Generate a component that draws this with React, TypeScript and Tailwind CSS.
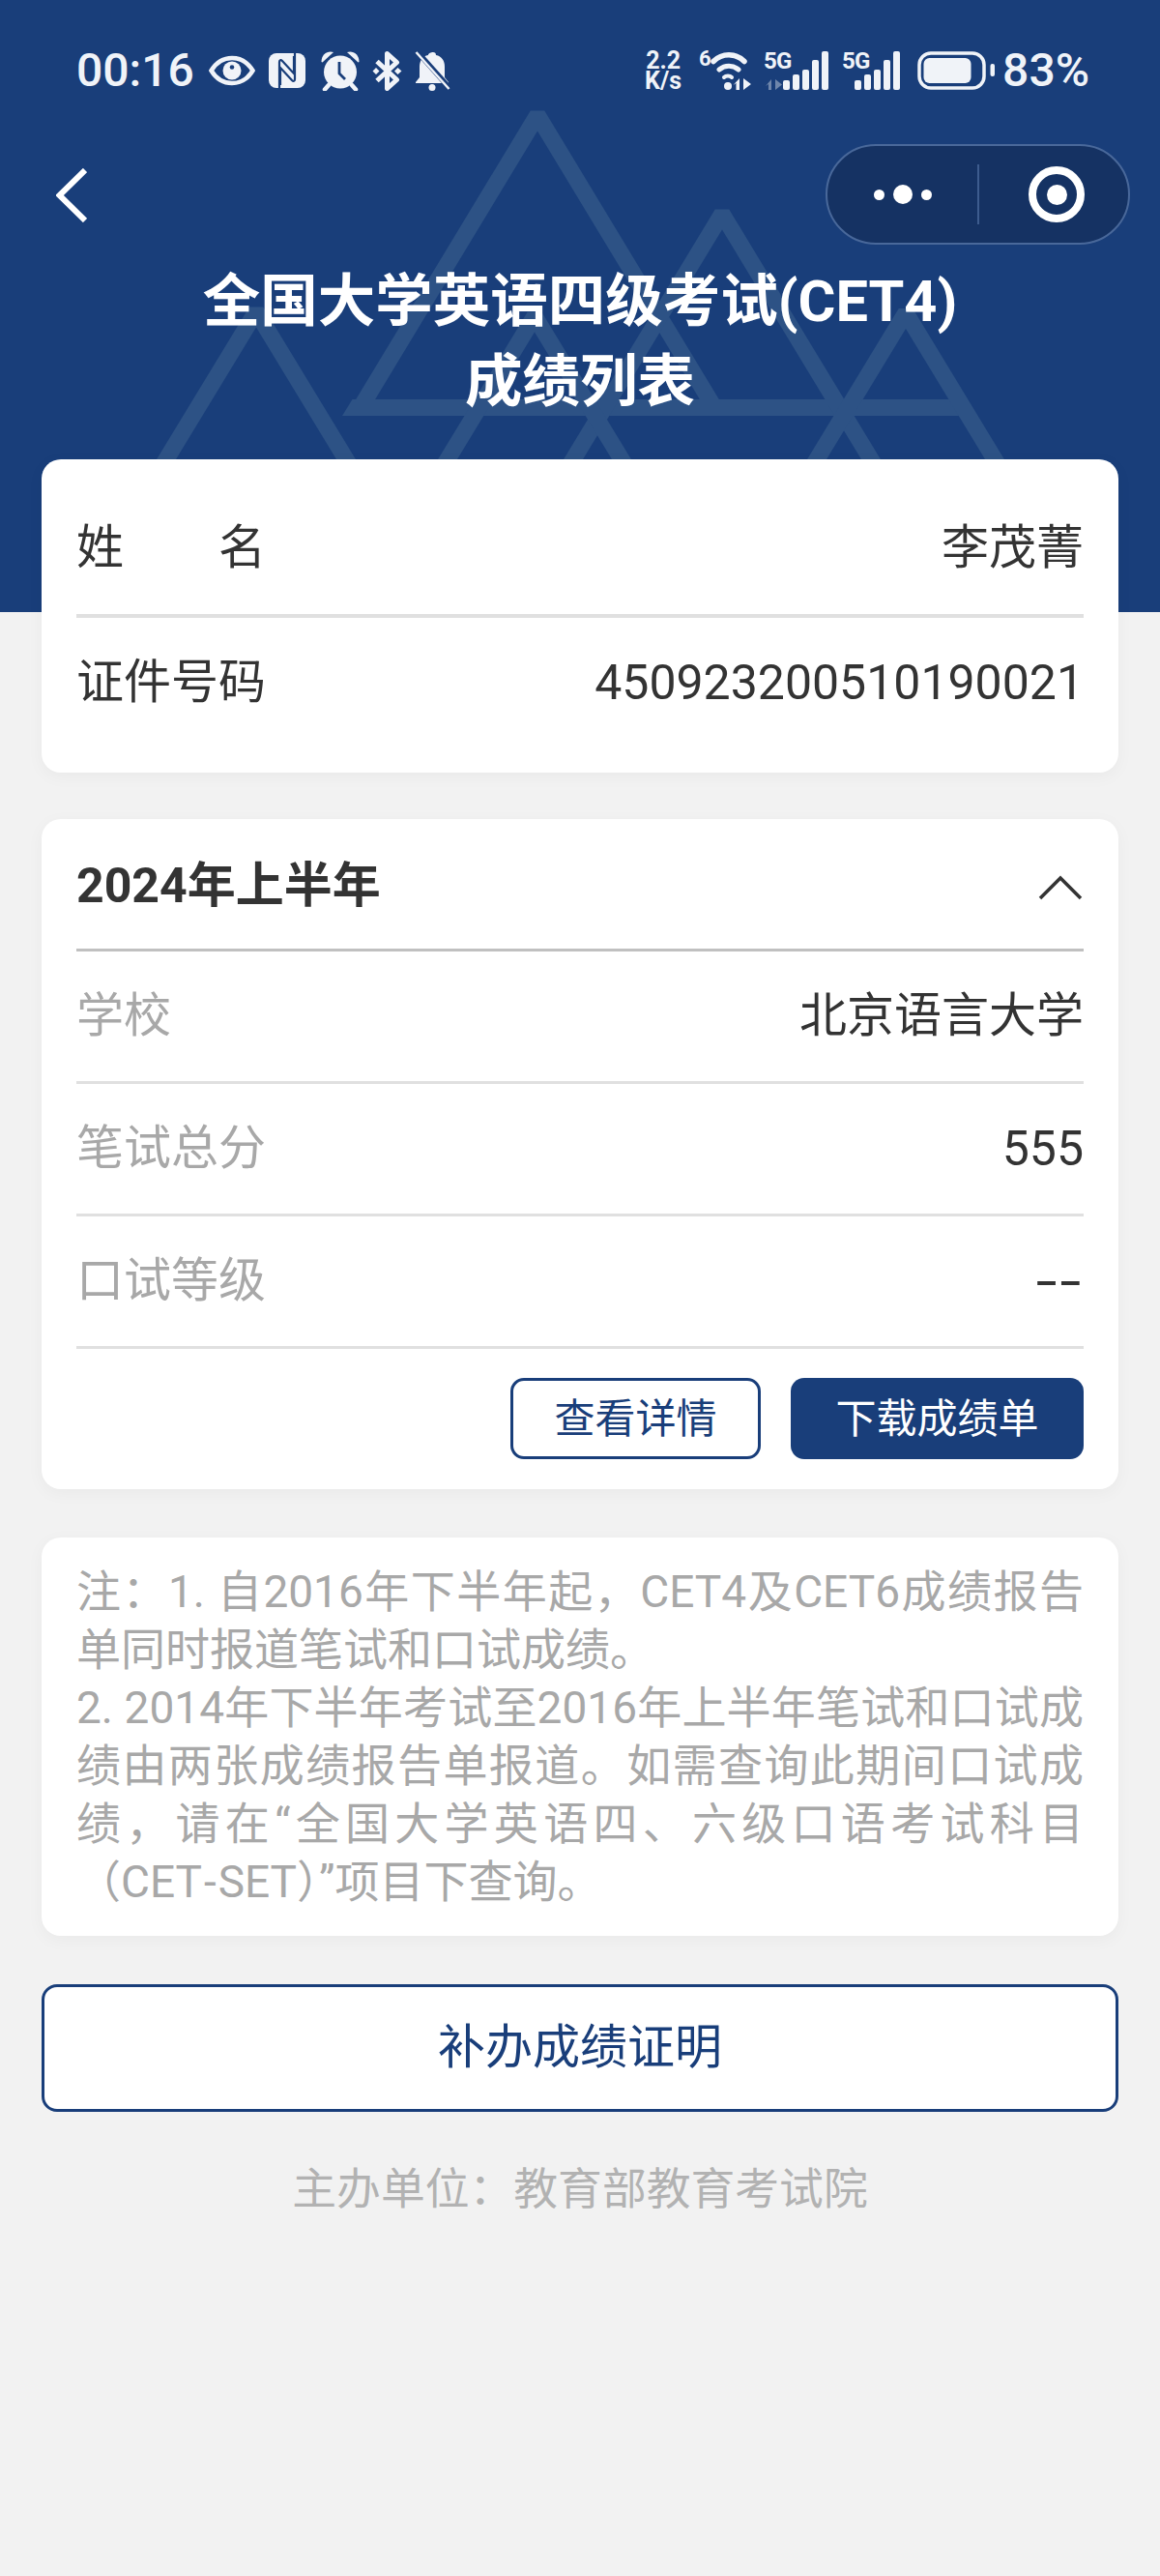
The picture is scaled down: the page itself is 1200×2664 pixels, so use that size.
import React from "react";

function Eye() {
  return (
    <svg width="48" height="32" viewBox="0 0 48 32" fill="none">
      <path d="M2.5 16C8 7 15 3 24 3s16 4 21.500 13C40 25 33 29 24 29S8 25 2.500 16Z" stroke="#f0f3f8" strokeWidth="4.500" />
      <circle cx="24" cy="16" r="9.500" fill="#f0f3f8" />
      <circle cx="24" cy="12.500" r="2.300" fill="#193e7a" />
    </svg>
  );
}

function Nfc() {
  return (
    <svg width="38" height="36" viewBox="0 0 38 36" fill="none">
      <rect width="38" height="36" rx="8" fill="#f0f3f8" />
      <path d="M11 36V9c0-2 1.500-2.500 3-1l12 13V3" stroke="#193e7a" strokeWidth="2.200" />
      <path d="M27 0v27c0 2-1.500 2.500-3 1L12 15v18" stroke="#193e7a" strokeWidth="2.200" />
    </svg>
  );
}

function Alarm() {
  return (
    <svg width="40" height="41" viewBox="0 0 40 41" fill="none">
      <circle cx="20" cy="21.500" r="17" fill="#f0f3f8" />
      <path d="M0.500 11C0.500 3 7 -1 13 1L1.500 11.500Z" fill="#f0f3f8" />
      <path d="M39.500 11C39.500 3 33 -1 27 1L38.500 11.500Z" fill="#f0f3f8" />
      <path d="M8 35l-4 4.500M32 35l4 4.500" stroke="#f0f3f8" strokeWidth="4.500" strokeLinecap="round" />
      <path d="M19 11v12l6 6" stroke="#193e7a" strokeWidth="2.800" />
    </svg>
  );
}

function Bluetooth() {
  return (
    <svg width="31" height="41" viewBox="0 0 31 41" fill="none">
      <path d="M5 10.500l20.500 19L15.500 38.500V2.500l10 9L5 30.500" stroke="#f0f3f8" strokeWidth="5" strokeLinejoin="round" />
      <path d="M0.500 20.500l3.500-3.500 3.500 3.500-3.500 3.500ZM23 20.500l3.500-3.500 4 3.500-4 3.500Z" fill="#f0f3f8" />
    </svg>
  );
}

function BellOff() {
  return (
    <svg width="38" height="41" viewBox="0 0 38 41" fill="none">
      <path d="M19 1c2 0 3 1 3 3 6 1 9 6 9 12v11l4 5v1H1v-1l4-5V16c0-6 3-11 9-12 0-2 3-3 5-3Z" fill="#f0f3f8" />
      <circle cx="18" cy="37.500" r="3.500" fill="#f0f3f8" />
      <path d="M4 2l32 36" stroke="#193e7a" strokeWidth="5.500" />
      <path d="M1.500 1l34 38" stroke="#f0f3f8" strokeWidth="2.500" />
    </svg>
  );
}

function Wifi() {
  return (
    <svg width="55" height="42" viewBox="0 0 55 42" fill="none" className="overflow-visible">
      <text x="0" y="16" fill="#f0f3f8" fontSize="22" fontWeight="700" fontFamily="Roboto">6</text>
      <path d="M15 11.500c9-9 23-9 32 0" stroke="#f0f3f8" strokeWidth="5.500" strokeLinecap="round" />
      <path d="M21 20c6-5 14-5 20 0" stroke="#f0f3f8" strokeWidth="5" strokeLinecap="round" />
      <path d="M26 28c2-2 6-2 8 0" stroke="#f0f3f8" strokeWidth="4" strokeLinecap="round" />
      <circle cx="30" cy="37" r="4" fill="#f0f3f8" />
      <path d="M42 29v12h-3.500v-7l-3 2 6.500-7ZM46 29l8 6-8 6Z" fill="#f0f3f8" />
    </svg>
  );
}

function Signal({ arrows }: { arrows: boolean }) {
  const bars = [
    { x: 0, top: 31 },
    { x: 10, top: 25 },
    { x: 20, top: 20 },
    { x: 30, top: 10 },
    { x: 40, top: 1 },
  ];
  return (
    <svg width={arrows ? 69 : 62} height="42" viewBox={arrows ? "-21 0 69 42" : "-14 0 62 42"} fill="none" className="overflow-visible">
      <text x={arrows ? -20 : -13} y="19" fill="#f0f3f8" fontSize="24" fontWeight="700" fontFamily="Roboto" letterSpacing="-0.800">5G</text>
      {arrows && <path d="M-12 30v11h-3v-6l-3 2 6-7ZM-8 30l7 5.500-7 5.500Z" fill="#6f86ab" />}
      {bars.map((b) => (
        <rect key={b.x} x={b.x} y={b.top} width="7" height={41 - b.top} rx="2" fill="#f0f3f8" />
      ))}
    </svg>
  );
}

function Battery() {
  return (
    <svg width="80" height="40" viewBox="0 0 80 40" fill="none">
      <rect x="2" y="2" width="67" height="36" rx="12" stroke="#f0f3f8" strokeWidth="3.500" />
      <rect x="6.500" y="7" width="49" height="26" rx="6" fill="#f0f3f8" />
      <rect x="75.500" y="13" width="4.500" height="13" rx="2" fill="#f0f3f8" />
    </svg>
  );
}

function HeaderArt() {
  return (
    <svg className="absolute inset-0 h-full w-full" viewBox="0 0 1200 633" fill="none" stroke="#2d5285" strokeWidth="17" strokeLinejoin="bevel">
      <path d="M373 421.500L556 119l183 302.500" />
      <polygon points="354,430 364.500,413 986,413 996,430" fill="#2d5285" stroke="none" />
      <path d="M590 480L747 221l157 259" />
      <path d="M842 480l95-156.500 95 156.500" />
      <path d="M460 480l93-153 93 153" />
      <path d="M169 480l96-158 96 158" />
    </svg>
  );
}

const rows = [
  { label: "学校", value: <span>北京语言大学</span> },
  { label: "笔试总分", value: <span className="text-[50px]">555</span> },
  { label: "口试等级", value: <span className="text-[80px] leading-none font-light tracking-[2px]">--</span> },
];

export default function App() {
  return (
    <div className="min-h-[2664px] bg-[#f2f2f2] font-['Roboto','Noto_Sans_CJK_SC',sans-serif] text-[49px] text-[#333]">
      <div className="relative h-[633px] bg-[#193e7a] text-white">
        <HeaderArt />
        <div className="relative flex h-[149px] items-start justify-between pt-[51px] pr-[73px] pl-[79px] text-[#f0f3f8]">
          <div className="flex h-[44px] items-center">
            <span className="mr-[15px] text-[48px] leading-none font-medium">00:16</span>
            <div className="flex items-center">
              <Eye />
              <div className="ml-[14px]"><Nfc /></div>
              <div className="ml-[16px]"><Alarm /></div>
              <div className="ml-[13px]"><Bluetooth /></div>
              <div className="ml-[13px]"><BellOff /></div>
            </div>
          </div>
          <div className="flex h-[44px] items-center">
            <div className="flex w-[42px] flex-col items-center text-[25px] leading-[21px] font-bold">
              <span>2.2</span>
              <span>K/s</span>
            </div>
            <div className="ml-[16px]"><Wifi /></div>
            <div className="ml-[11px]"><Signal arrows /></div>
            <div className="ml-[12px]"><Signal arrows={false} /></div>
            <div className="ml-[17px]"><Battery /></div>
            <span className="ml-[8px] text-[48px] leading-none font-medium">83%</span>
          </div>
        </div>

        <div className="relative flex h-[104px] items-center justify-between pr-[31px] pl-[58px]">
          <svg width="32" height="56" viewBox="0 0 32 56" fill="none" stroke="white" strokeWidth="6" className="mt-[2px]">
            <path d="M30 2L3.500 28 30 54" />
          </svg>
          <div className="flex h-[104px] w-[315px] items-center rounded-full border-2 border-[#49689a] bg-[#153263]">
            <div className="flex w-[155px] items-center justify-center gap-[9px]">
              <span className="h-[11px] w-[11px] rounded-full bg-white" />
              <span className="h-[20px] w-[20px] rounded-full bg-white" />
              <span className="h-[11px] w-[11px] rounded-full bg-white" />
            </div>
            <span className="h-[62px] w-[2px] bg-[#3d5c8e]" />
            <div className="flex flex-1 items-center justify-center pl-[6px]">
              <span className="flex h-[58px] w-[58px] items-center justify-center rounded-full border-[8px] border-white">
                <span className="h-[21px] w-[21px] rounded-full bg-white" />
              </span>
            </div>
          </div>
        </div>

        <h1 className="relative mt-[18px] text-center text-[59.500px] leading-[83px] font-bold">
          全国大学英语四级考试(CET4)
          <br />
          成绩列表
        </h1>
      </div>

      <div className="relative -mt-[158px] flex flex-col px-[43px]">
        <section className="rounded-[20px] bg-white px-[36px] pb-[28px] shadow-[0_4px_18px_rgba(0,0,0,0.04)]">
          <div className="flex h-[164px] items-center justify-between border-b-[4px] border-[#e0e0e0] pt-[24px]">
            <span className="flex w-[196px] justify-between">
              <span>姓</span>
              <span>名</span>
            </span>
            <span>李茂菁</span>
          </div>
          <div className="flex h-[132px] items-center justify-between pt-[2px]">
            <span>证件号码</span>
            <span className="text-[50px]">450923200510190021</span>
          </div>
        </section>

        <section className="mt-[48px] rounded-[20px] bg-white px-[36px] pb-[31px] shadow-[0_4px_18px_rgba(0,0,0,0.04)]">
          <div className="flex h-[137px] items-center justify-between border-b-[3px] border-[#c0c0c0]">
            <span className="pt-[4px] text-[50px] font-bold">2024年上半年</span>
            <svg width="46" height="26" viewBox="0 0 46 26" fill="none" stroke="#333" strokeWidth="3.500" className="mt-[7px] mr-[1px]">
              <path d="M2 24L23 3l21 21" />
            </svg>
          </div>
          {rows.map((row) => (
            <div key={row.label} className="flex h-[137px] items-center justify-between border-b-[3px] border-[#e0e0e0]">
              <span className="text-[#a8a8a8]">{row.label}</span>
              {row.value}
            </div>
          ))}
          <div className="mt-[30px] flex justify-end gap-[31px]">
            <button className="h-[84px] w-[259px] rounded-[14px] border-[3px] border-[#193e7a] text-[42px] text-[#193e7a]">
              查看详情
            </button>
            <button className="h-[84px] w-[303px] rounded-[14px] bg-[#193e7a] text-[42px] text-white">
              下载成绩单
            </button>
          </div>
        </section>

        <section className="mt-[50px] rounded-[20px] bg-white px-[36px] py-[26px] text-justify text-[46px] leading-[60px] text-[#a8a8a8] shadow-[0_4px_18px_rgba(0,0,0,0.04)]">
          注：1. 自2016年下半年起，CET4及CET6成绩报告单同时报道笔试和口试成绩。
          <br />
          2. 2014年下半年考试至2016年上半年笔试和口试成绩由两张成绩报告单报道。如需查询此期间口试成绩，请在“全国大学英语四、六级口语考试科目（CET<span className="px-[2px]">-</span>SET）”项目下查询。
        </section>

        <button className="mt-[50px] h-[132px] w-full rounded-[16px] border-[3px] border-[#193e7a] bg-white text-[#193e7a]">
          补办成绩证明
        </button>

        <p className="mt-[52px] text-center text-[45.800px] leading-[58px] text-[#b2b2b2]">
          主办单位：教育部教育考试院
        </p>
      </div>
    </div>
  );
}
